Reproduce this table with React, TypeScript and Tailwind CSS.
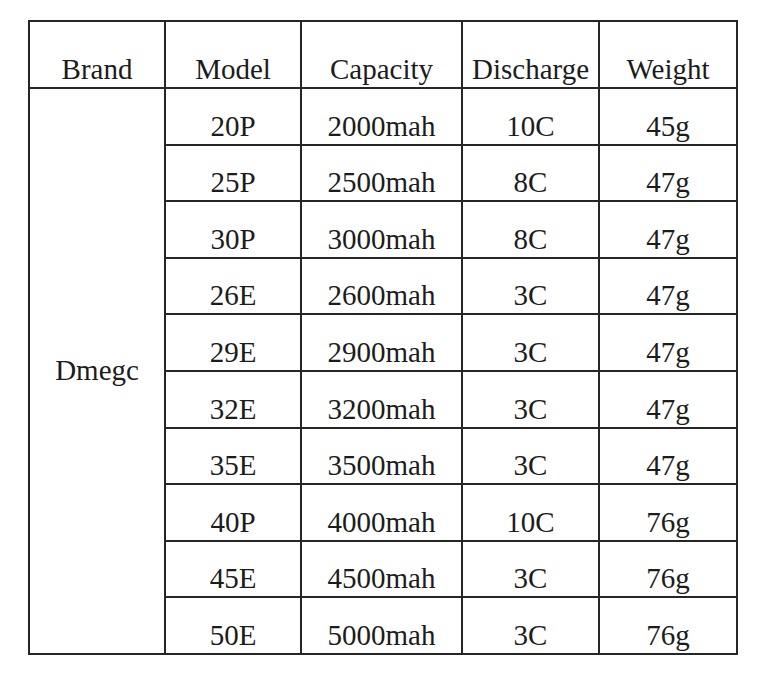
import React from "react";

const rows = [
  ["20P", "2000mah", "10C", "45g"],
  ["25P", "2500mah", "8C", "47g"],
  ["30P", "3000mah", "8C", "47g"],
  ["26E", "2600mah", "3C", "47g"],
  ["29E", "2900mah", "3C", "47g"],
  ["32E", "3200mah", "3C", "47g"],
  ["35E", "3500mah", "3C", "47g"],
  ["40P", "4000mah", "10C", "76g"],
  ["45E", "4500mah", "3C", "76g"],
  ["50E", "5000mah", "3C", "76g"],
];

const headers = ["Brand", "Model", "Capacity", "Discharge", "Weight"];

export default function App() {
  return (
    <div className="w-[770px] h-[673px] bg-white text-[#1c1c1c] font-['Liberation_Serif',serif]">
      <div className="pt-[20px] pl-[28px]">
        <div className="grid w-[710px] h-[635px] grid-cols-[134px_134px_159px_135px_136px] grid-rows-[65px_repeat(10,1fr)] gap-[2px] p-[2px] bg-[#262626] text-[29px] leading-[29px]">
          {headers.map((h) => (
            <div key={h} className="bg-white flex items-end justify-center pb-[3px]">
              {h}
            </div>
          ))}
          <div className="bg-white row-span-10 flex items-center justify-center">
            Dmegc
          </div>
          {rows.map((r) =>
            r.map((c, i) => (
              <div
                key={r[0] + i}
                className="bg-white flex items-end justify-center pb-[3px]"
              >
                {c}
              </div>
            ))
          )}
        </div>
      </div>
    </div>
  );
}
